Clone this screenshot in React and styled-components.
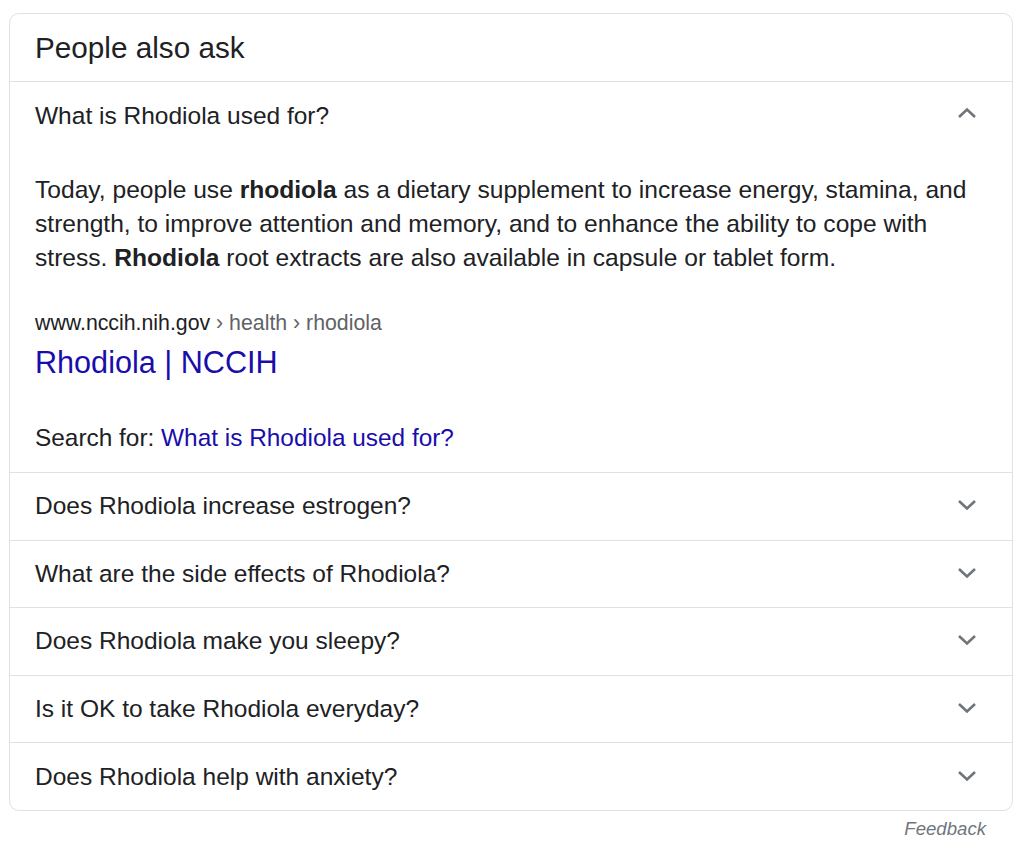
import React from 'react'
import styled, { createGlobalStyle } from 'styled-components'

const GlobalStyle = createGlobalStyle`
    body {
        margin: 0;
        background: #fff;
        font-family: Arial, "Liberation Sans", sans-serif;
        color: #202124;
    }
`

const Page = styled.div`
    padding: 13px 11px 0 9px;
`

const Card = styled.section`
    border: 1px solid #dfe1e5;
    border-radius: 10px;
    overflow: hidden;
`

const Title = styled.h2`
    margin: 0;
    height: 67px;
    display: flex;
    align-items: center;
    padding: 0 25px;
    font-family: Arial, "Liberation Sans", sans-serif;
    font-size: 29.7px;
    font-weight: 400;
    color: #202124;
    border-bottom: 1px solid #dfe1e5;
`

const Item = styled.div`
    border-top: ${p => (p.first ? 'none' : '1px solid #dfe1e5')};
`

const Question = styled.div`
    display: flex;
    align-items: center;
    justify-content: space-between;
    height: ${p => (p.open ? '68px' : '66.6px')};
    padding: 0 35px 0 25px;
    font-size: 24.5px;
    color: #202124;
    cursor: pointer;
`

const Chevron = styled.svg`
    width: 20px;
    height: 12px;
    fill: none;
    stroke: #70757a;
    stroke-width: 2.6;
    margin-top: ${p => (p.up ? '-6px' : '-2px')};
`

const Answer = styled.div`
    padding: 23px 25px 21px;
`

const Snippet = styled.p`
    margin: 0;
    font-size: 24.6px;
    line-height: 34px;
    color: #202124;
    b {
        font-weight: 700;
    }
`

const Cite = styled.div`
    margin-top: 36px;
    font-size: 21.3px;
    line-height: 24px;
    color: #202124;
    span {
        color: #5f6368;
    }
`

const Source = styled.a`
    display: block;
    margin-top: 10px;
    font-size: 30.6px;
    line-height: 34px;
    color: #1a0dab;
    text-decoration: none;
`

const SearchFor = styled.div`
    margin-top: 46px;
    font-size: 24.4px;
    line-height: 26px;
    color: #202124;
    a {
        color: #1a0dab;
        text-decoration: none;
    }
`

const Feedback = styled.div`
    display: flex;
    justify-content: flex-end;
    padding: 7px 27px 0 0;
    font-size: 18.6px;
    font-style: italic;
    color: #70757a;
`

const ChevronIcon = ({ up }) => (
    <Chevron up={up} viewBox="0 0 20 12">
        <polyline points={up ? '2,10 10,2.5 18,10' : '2,2 10,9.5 18,2'} />
    </Chevron>
)

const questions = [
    'Does Rhodiola increase estrogen?',
    'What are the side effects of Rhodiola?',
    'Does Rhodiola make you sleepy?',
    'Is it OK to take Rhodiola everyday?',
    'Does Rhodiola help with anxiety?',
]

const App = () => {
    return (
        <Page>
            <GlobalStyle />
            <Card>
                <Title>People also ask</Title>
                <Item first>
                    <Question open>
                        What is Rhodiola used for?
                        <ChevronIcon up />
                    </Question>
                    <Answer>
                        <Snippet>
                            Today, people use <b>rhodiola</b> as a dietary supplement to increase energy, stamina, and
                            strength, to improve attention and memory, and to enhance the ability to cope with
                            stress. <b>Rhodiola</b> root extracts are also available in capsule or tablet form.
                        </Snippet>
                        <Cite>
                            www.nccih.nih.gov <span>› health › rhodiola</span>
                        </Cite>
                        <Source href="#">Rhodiola | NCCIH</Source>
                        <SearchFor>
                            Search for: <a href="#">What is Rhodiola used for?</a>
                        </SearchFor>
                    </Answer>
                </Item>
                {questions.map(q => (
                    <Item key={q}>
                        <Question>
                            {q}
                            <ChevronIcon />
                        </Question>
                    </Item>
                ))}
            </Card>
            <Feedback>Feedback</Feedback>
        </Page>
    )
}

export default App
